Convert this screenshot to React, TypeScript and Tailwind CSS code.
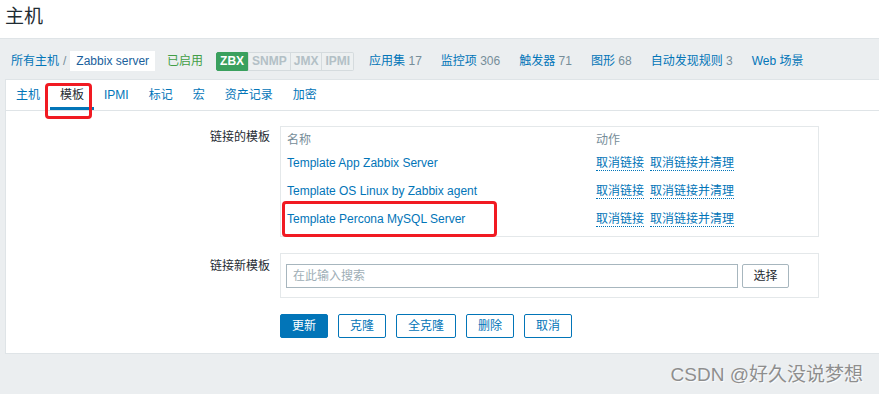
const font = "font-['Liberation_Sans','Noto_Sans_CJK_SC',sans-serif]";

const navItems = [
  { label: '应用集', count: '17' },
  { label: '监控项', count: '306' },
  { label: '触发器', count: '71' },
  { label: '图形', count: '68' },
  { label: '自动发现规则', count: '3' },
  { label: 'Web 场景', count: '' },
];

const tabs = ['主机', '模板', 'IPMI', '标记', '宏', '资产记录', '加密'];

const templates = [
  'Template App Zabbix Server',
  'Template OS Linux by Zabbix agent',
  'Template Percona MySQL Server',
];

const ActionLink = ({ children }: { children: string }) => (
  <span className="inline-block leading-[14px] text-[#0275b8] border-b border-dotted border-[#0275b8]">{children}</span>
);

export default function App() {
  return (
    <div className={`relative w-[879px] h-[394px] overflow-hidden bg-[#ebeef0] text-[12px] text-[#1f2c33] ${font}`}>
      {/* page title */}
      <div className="h-[39px] bg-white border-b border-[#dfe4e7] pl-[5px] pt-[5px]">
        <h1 className="text-[19px] leading-[24px] text-[#1f2c33]">主机</h1>
      </div>

      {/* breadcrumbs + host nav */}
      <div className="h-[40px] flex items-center pl-[11px] pt-[4px] leading-[16px]">
        <span className="text-[#0275b8]">所有主机</span>
        <span className="ml-[4px] text-[#768d99]">/</span>
        <span className="ml-[4px] h-[20px] px-[6px] flex items-center bg-white text-[#1a5f9c]">Zabbix server</span>
        <span className="ml-[12px] text-[#429e47]">已启用</span>
        <div className="ml-[13px] flex items-center font-bold leading-[15px]">
          <span className="px-[3px] py-[1px] bg-[#3aa05e] text-white border border-[#3aa05e] rounded-l-[2px]">ZBX</span>
          <span className="px-[3px] py-[1px] bg-[#edf0f1] text-[#b3c0c6] border border-[#d5dbde]">SNMP</span>
          <span className="px-[3px] py-[1px] bg-[#edf0f1] text-[#b3c0c6] border border-l-0 border-[#d5dbde]">JMX</span>
          <span className="px-[3px] py-[1px] bg-[#edf0f1] text-[#b3c0c6] border border-l-0 border-[#d5dbde] rounded-r-[2px]">IPMI</span>
        </div>
        <div className="ml-[15px] flex items-center gap-[19px]">
          {navItems.map((n) => (
            <span key={n.label}>
              <span className="text-[#0275b8]">{n.label}</span>
              {n.count && <span className="text-[#768d99]"> {n.count}</span>}
            </span>
          ))}
        </div>
      </div>

      {/* main panel */}
      <div className="ml-[5px] w-[880px] h-[275px] bg-white border border-[#dfe4e7]">
        <div className="h-[31px] flex border-b border-[#dfe4e7]">
          {tabs.map((t) => (
            <div
              key={t}
              className={`px-[10px] h-[30px] flex items-center ${t === '模板' ? 'text-[#1f2c33] border-b-[3px] border-[#0275b8] pt-[3px]' : 'text-[#0275b8]'}`}
            >
              {t}
            </div>
          ))}
        </div>

        <div className="pt-[15px] pb-[15px]">
          {/* linked templates */}
          <div className="flex">
            <div className="w-[264px] text-right pt-[3px] leading-[16px]">链接的模板</div>
            <div className="ml-[10px] w-[539px] h-[111px] border border-[#e4e8ea] px-[6px] pt-[4px] pb-[3px]">
              <div className="h-[18px] flex items-center text-[#768d99]">
                <span className="w-[309px]">名称</span>
                <span>动作</span>
              </div>
              {templates.map((t) => (
                <div key={t} className="h-[28px] flex items-center">
                  <span className="w-[309px] text-[#0275b8]">{t}</span>
                  <div className="flex gap-[6px]">
                    <ActionLink>取消链接</ActionLink>
                    <ActionLink>取消链接并清理</ActionLink>
                  </div>
                </div>
              ))}
            </div>
          </div>

          {/* link new template */}
          <div className="flex mt-[16px]">
            <div className="w-[264px] text-right pt-[5px] leading-[16px]">链接新模板</div>
            <div className="ml-[10px] w-[539px] h-[45px] border border-[#e4e8ea] pl-[5px] pt-[10px] flex items-start gap-[4px]">
              <div className="w-[452px] h-[24px] border border-[#a7b6be] flex items-center pl-[6px] text-[#9eaeb6]">在此输入搜索</div>
              <div className="w-[47px] h-[24px] border border-[#a7b6be] rounded-[2px] flex items-center justify-center text-[#1f2c33] bg-white">选择</div>
            </div>
          </div>

          {/* buttons */}
          <div className="mt-[16px] ml-[274px] flex gap-[10px]">
            <button className="h-[24px] px-[11px] bg-[#0275b8] border border-[#0275b8] text-white rounded-[2px]">更新</button>
            {['克隆', '全克隆', '删除', '取消'].map((b) => (
              <button key={b} className="h-[24px] px-[11px] bg-white border border-[#0275b8] text-[#0275b8] rounded-[2px]">{b}</button>
            ))}
          </div>
        </div>
      </div>

      {/* red annotation boxes */}
      <div className="absolute left-[45px] top-[83px] w-[47px] h-[36px] border-[3px] border-[#f11a22] rounded-[4px]"></div>
      <div className="absolute left-[282px] top-[201px] w-[215px] h-[36px] border-[3px] border-[#f11a22] rounded-[4px]"></div>

      {/* watermark */}
      <div className="absolute right-[16px] top-[363px] text-[19px] leading-[24px] text-[#8e8e8e] [text-shadow:1px_1px_1px_rgba(255,255,255,0.9)]">
        CSDN @好久没说梦想
      </div>
    </div>
  );
}
